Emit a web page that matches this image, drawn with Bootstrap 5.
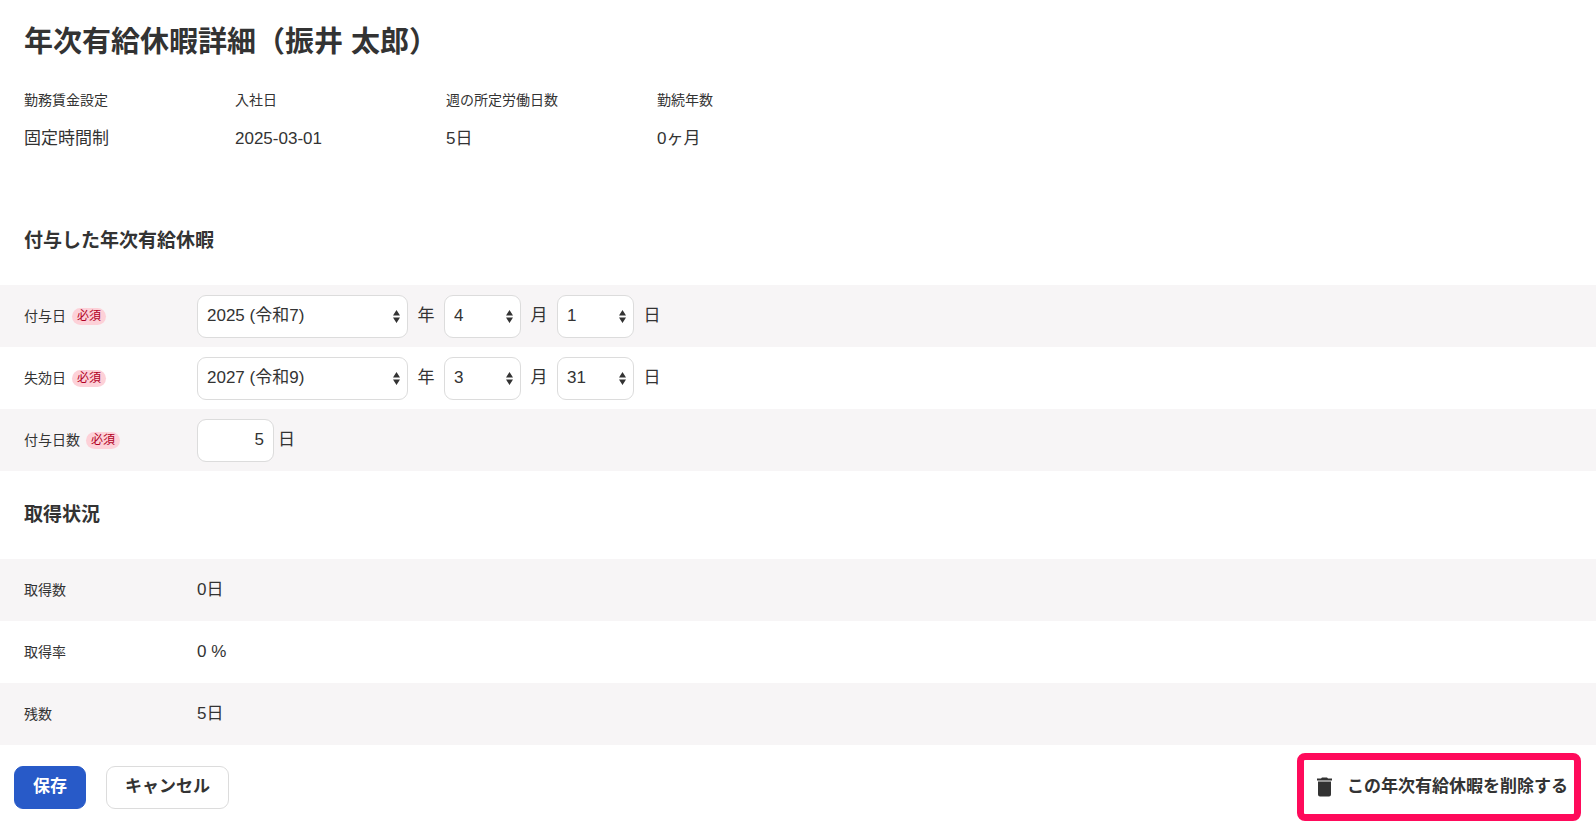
<!DOCTYPE html>
<html lang="ja">
<head>
<meta charset="utf-8">
<meta name="viewport" content="width=device-width, initial-scale=1">
<title>年次有給休暇詳細</title>
<link href="https://cdn.jsdelivr.net/npm/bootstrap@5.3.0/dist/css/bootstrap.min.css" rel="stylesheet">
<style>
  body { font-family: "Liberation Sans", "Noto Sans CJK JP", sans-serif; font-size: 17px; line-height: 24px; color: #333; background: #fff; }
  .page-title { font-size: 29px; line-height: 40px; font-weight: 700; padding: 22px 24px 0; }
  .summary { padding: 26px 24px 0; }
  .summary-item { width: 211px; }
  .summary-item dt, .row-label { font-size: 14px; line-height: 24px; font-weight: 400; }
  .summary-item dd { padding-top: 15px; }
  .section-title { font-size: 19px; line-height: 28px; font-weight: 700; padding: 30px 24px; }
  .section-first { padding-top: 76px; }
  .data-row { min-height: 62px; padding: 0 24px; }
  .data-row:nth-child(odd) { background: #f7f5f6; }
  .row-label { width: 173px; flex: none; }
  .required { font-size: 12px; line-height: 17px; font-weight: 400; color: #b10024; background: #fdd1d8; padding: 0 5px; margin-left: 6px; }
  .field { height: 43px; border: 1px solid #dcdcdc; border-radius: 9px; font-size: 17px; line-height: 24px; color: #333; padding: 0 9px; width: 77px; }
  .field.form-select { background-color: #fff; background-image: url("data:image/svg+xml,%3Csvg xmlns='http://www.w3.org/2000/svg' viewBox='0 0 7 13'%3E%3Cpath fill='%23333' d='M3.5 0L7 5.500H0zM3.5 13L0 7.500h7z'/%3E%3C/svg%3E"); background-size: 7px 13px; background-position: right 7px center; }
  .field-year { width: 211px; }
  .date-group { gap: 9px; }
  .date-group label { width: 18px; text-align: center; }
  .actions { padding: 8px 15px 8px 14px; }
  .action-btn { height: 43px; padding: 0 18px; border-radius: 9px; font-size: 17px; line-height: 24px; font-weight: 700; color: #333; }
  .btn-save, .btn-save:hover { background: #285ac8; border-color: #285ac8; color: #fff; }
  .btn-cancel { border-color: #dcdcdc; background: #fff; }
  .action-group { gap: 20px; }
  .delete-frame { border: 7px solid #ff0a5b; border-radius: 8px; padding: 5px 6px 6px 2px; }
  .delete-frame .action-btn { padding: 0 0 0 10px; gap: 14px; }
</style>
</head>
<body>
<main>
  <h1 class="page-title mb-0">年次有給休暇詳細（振井 太郎）</h1>
  <dl class="summary d-flex flex-wrap mb-0">
    <div class="summary-item"><dt>勤務賃金設定</dt><dd class="mb-0">固定時間制</dd></div>
    <div class="summary-item"><dt>入社日</dt><dd class="mb-0">2025-03-01</dd></div>
    <div class="summary-item"><dt>週の所定労働日数</dt><dd class="mb-0">5日</dd></div>
    <div class="summary-item"><dt>勤続年数</dt><dd class="mb-0">0ヶ月</dd></div>
  </dl>

  <form>
    <h2 class="section-title section-first mb-0">付与した年次有給休暇</h2>
    <div>
      <div class="data-row d-flex align-items-center">
        <label class="row-label d-flex align-items-center" for="grantYear">付与日<span class="required rounded-pill">必須</span></label>
        <div class="date-group d-flex align-items-center">
          <select class="form-select field field-year" id="grantYear"><option>2025 (令和7)</option></select>
          <label for="grantYear">年</label>
          <select class="form-select field" id="grantMonth"><option>4</option></select>
          <label for="grantMonth">月</label>
          <select class="form-select field" id="grantDay"><option>1</option></select>
          <label for="grantDay">日</label>
        </div>
      </div>
      <div class="data-row d-flex align-items-center">
        <label class="row-label d-flex align-items-center" for="expireYear">失効日<span class="required rounded-pill">必須</span></label>
        <div class="date-group d-flex align-items-center">
          <select class="form-select field field-year" id="expireYear"><option>2027 (令和9)</option></select>
          <label for="expireYear">年</label>
          <select class="form-select field" id="expireMonth"><option>3</option></select>
          <label for="expireMonth">月</label>
          <select class="form-select field" id="expireDay"><option>31</option></select>
          <label for="expireDay">日</label>
        </div>
      </div>
      <div class="data-row d-flex align-items-center">
        <label class="row-label d-flex align-items-center" for="grantDays">付与日数<span class="required rounded-pill">必須</span></label>
        <div class="d-flex align-items-center gap-1">
          <input class="form-control field text-end" id="grantDays" type="text" inputmode="numeric" value="5">
          <label for="grantDays">日</label>
        </div>
      </div>
    </div>

    <h2 class="section-title mb-0">取得状況</h2>
    <dl class="mb-0">
      <div class="data-row d-flex align-items-center"><dt class="row-label">取得数</dt><dd class="mb-0">0日</dd></div>
      <div class="data-row d-flex align-items-center"><dt class="row-label">取得率</dt><dd class="mb-0">0 %</dd></div>
      <div class="data-row d-flex align-items-center"><dt class="row-label">残数</dt><dd class="mb-0">5日</dd></div>
    </dl>

    <div class="actions d-flex align-items-center justify-content-between">
      <div class="action-group d-flex align-items-center">
        <button type="submit" class="btn action-btn btn-save">保存</button>
        <button type="button" class="btn action-btn btn-cancel">キャンセル</button>
      </div>
      <div class="delete-frame">
        <button type="button" class="btn action-btn d-flex align-items-center border-0">
          <svg width="17" height="20" viewBox="0 0 17 20" fill="#333" aria-hidden="true"><path d="M1 1.500h4L6 .5h5l1 1h4v2H1zM2 4.500h13v13a2 2 0 0 1-2 2H4a2 2 0 0 1-2-2z"/></svg>
          <span>この年次有給休暇を削除する</span>
        </button>
      </div>
    </div>
  </form>
</main>
<script src="https://cdn.jsdelivr.net/npm/bootstrap@5.3.0/dist/js/bootstrap.bundle.min.js"></script>
</body>
</html>
